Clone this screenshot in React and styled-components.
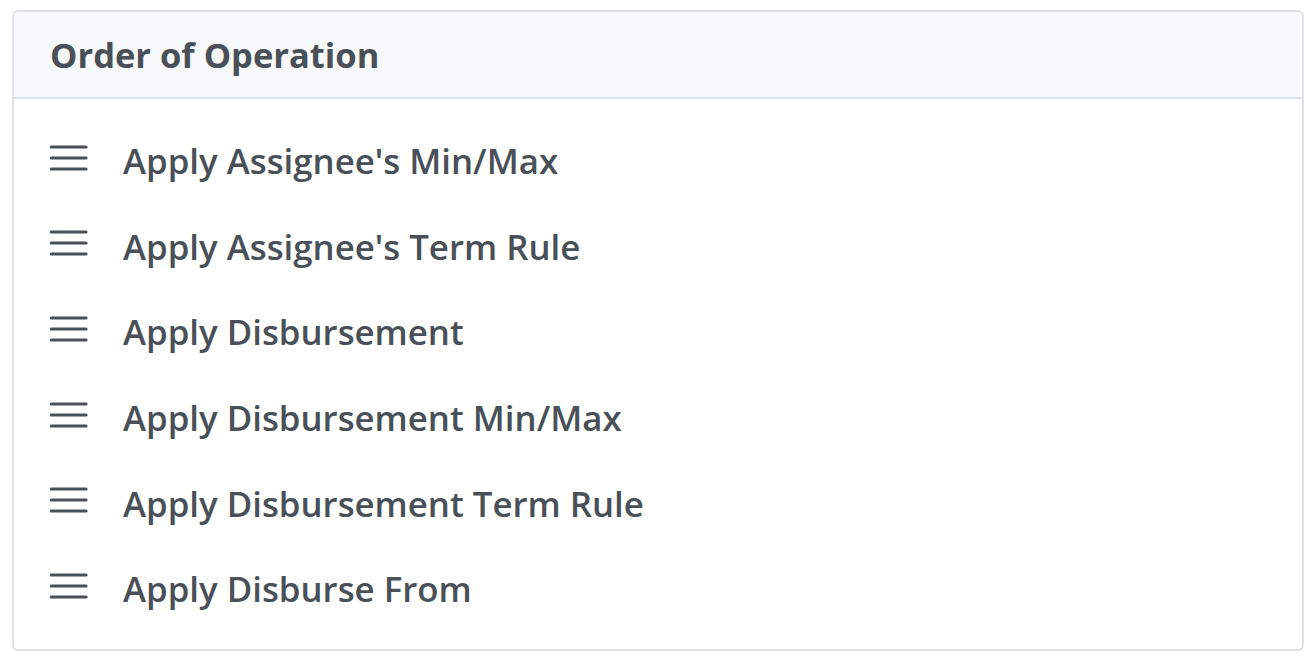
import React from "react";
import styled, { createGlobalStyle } from "styled-components";

const GlobalStyle = createGlobalStyle`
    body {
        margin: 0;
        background: #ffffff;
        font-family: "Open Sans", "Noto Sans", sans-serif;
    }
`;

const Page = styled("div")`
    padding: 10px 8px 10px 12px;
`;

const Card = styled("div")`
    border: 2px solid #dee2e6;
    border-radius: 6px;
    background: #fff;
    overflow: hidden;
`;

const CardHeader = styled("div")`
    height: 85px;
    display: flex;
    align-items: center;
    padding: 0 36px;
    background: #f8f9fa;
    border-bottom: 2px solid #dee2e6;
`;

const Title = styled("h5")`
    margin: 0;
    font-size: 34.5px;
    font-weight: 700;
    color: #495057;
`;

const List = styled("ul")`
    margin: 0;
    padding: 19px 36px 17px;
    list-style: none;
`;

const Item = styled("li")`
    height: 85.6px;
    display: flex;
    align-items: center;
    gap: 35px;
    color: #495057;
    font-size: 34.8px;
    font-weight: 600;
`;

const Handle = styled("svg")`
    flex: none;
    width: 38px;
    height: 26px;
    margin-bottom: 6px;
`;

const steps = [
    "Apply Assignee's Min/Max",
    "Apply Assignee's Term Rule",
    "Apply Disbursement",
    "Apply Disbursement Min/Max",
    "Apply Disbursement Term Rule",
    "Apply Disburse From",
];

const Bars = () => (
    <Handle viewBox="0 0 38 26">
        <g stroke="#495057" strokeWidth="3.2" strokeLinecap="round">
            <line x1="1.5" y1="2" x2="36" y2="2" />
            <line x1="1.5" y1="13" x2="36" y2="13" />
            <line x1="1.5" y1="24" x2="36" y2="24" />
        </g>
    </Handle>
);

const App = () => (
    <Page>
        <GlobalStyle />
        <Card>
            <CardHeader>
                <Title>Order of Operation</Title>
            </CardHeader>
            <List>
                {steps.map((s) => (
                    <Item key={s}>
                        <Bars />
                        <span>{s}</span>
                    </Item>
                ))}
            </List>
        </Card>
    </Page>
);

export default App;
